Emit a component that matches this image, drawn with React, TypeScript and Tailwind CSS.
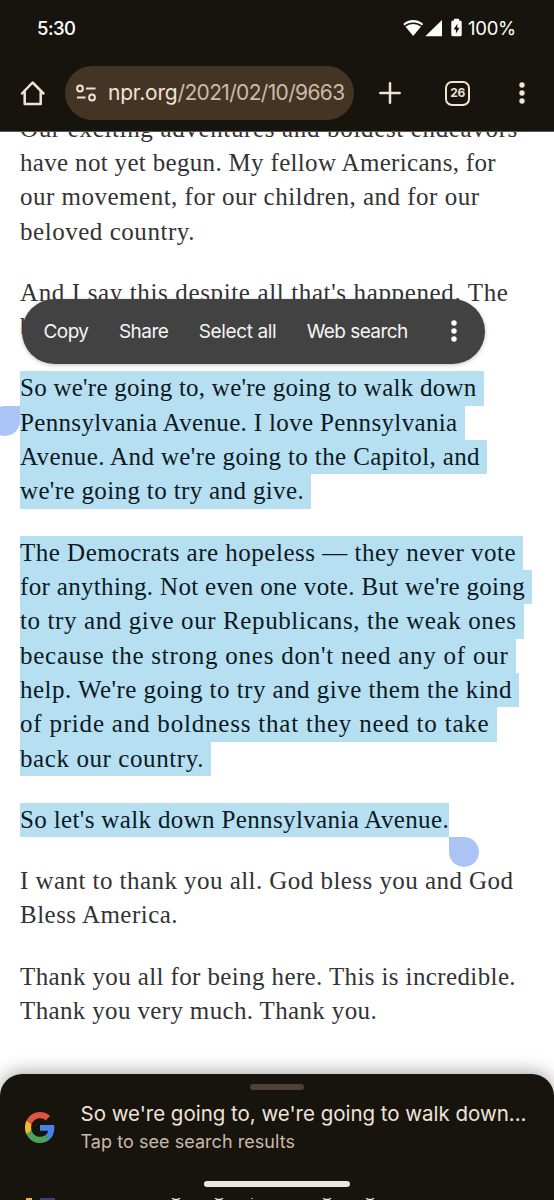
import { useLayoutEffect, useRef, useState } from "react";
import clsx from "clsx";

// Spreads letter spacing so that a run of text fills the given width
function FitText({ text, width, className }: { text: string; width: number; className?: string }) {
  const ref = useRef<HTMLSpanElement>(null);
  const [spacing, setSpacing] = useState(0);

  useLayoutEffect(() => {
    if (!ref.current) return;
    const natural = ref.current.getBoundingClientRect().width - spacing * text.length;
    setSpacing((width - natural) / text.length);
  }, [text, width]);

  return (
    <span ref={ref} className={clsx("inline-block whitespace-pre", className)} style={{ letterSpacing: `${spacing}px` }}>
      {text}
    </span>
  );
}

type TextLine = { text: string; width: number };
type Paragraph = { selected?: boolean; lines: TextLine[] };

const paragraphs: Paragraph[] = [
  {
    lines: [
      { text: "Our exciting adventures and boldest endeavors", width: 498 },
      { text: "have not yet begun. My fellow Americans, for", width: 476 },
      { text: "our movement, for our children, and for our", width: 459.5 },
      { text: "beloved country.", width: 175 },
    ],
  },
  {
    lines: [
      { text: "And I say this despite all that's happened. The", width: 488.5 },
      { text: "b", width: 12 },
    ],
  },
  {
    selected: true,
    lines: [
      { text: "So we're going to, we're going to walk down", width: 456.5 },
      { text: "Pennsylvania Avenue. I love Pennsylvania", width: 437.5 },
      { text: "Avenue. And we're going to the Capitol, and", width: 460 },
      { text: "we're going to try and give.", width: 284 },
    ],
  },
  {
    selected: true,
    lines: [
      { text: "The Democrats are hopeless — they never vote", width: 496 },
      { text: "for anything. Not even one vote. But we're going", width: 505 },
      { text: "to try and give our Republicans, the weak ones", width: 496.5 },
      { text: "because the strong ones don't need any of our", width: 488.5 },
      { text: "help. We're going to try and give them the kind", width: 492 },
      { text: "of pride and boldness that they need to take", width: 469.5 },
      { text: "back our country.", width: 184 },
    ],
  },
  {
    selected: true,
    lines: [{ text: "So let's walk down Pennsylvania Avenue.", width: 429 }],
  },
  {
    lines: [
      { text: "I want to thank you all. God bless you and God", width: 493.5 },
      { text: "Bless America.", width: 158 },
    ],
  },
  {
    lines: [
      { text: "Thank you all for being here. This is incredible.", width: 496 },
      { text: "Thank you very much. Thank you.", width: 357 },
    ],
  },
];

const actions = [
  { label: "Copy", width: 45 },
  { label: "Share", width: 49.5 },
  { label: "Select all", width: 77.5 },
  { label: "Web search", width: 101 },
];

function StatusBar() {
  return (
    <div className="flex h-[55px] items-center justify-between pl-[37px] pr-[38px] text-white">
      <FitText text="5:30" width={38.5} className="pt-[2px] text-[18.5px] font-medium" />
      <div className="flex items-center">
        <svg width="60" height="20" viewBox="0 0 60 20">
          <path d="M10.2 18 L0.3 5.9 C3 3.3 6.4 2 10.2 2 S17.4 3.3 20.1 5.9Z" fill="#fff" />
          <path d="M1.8 8.1 C4 6.3 6.8 5.2 10.2 5.2 S16.4 6.3 18.6 8.1" fill="none" stroke="#17130d" strokeWidth="1.5" />
          <path d="M39 2V18.3H22.3Z" fill="#fff" />
          <path d="M51 .8h5v1.8h1.2a1.5 1.5 0 0 1 1.5 1.5v12.7a1.5 1.5 0 0 1-1.5 1.5h-7.4a1.5 1.5 0 0 1-1.5-1.5V4.1a1.5 1.5 0 0 1 1.5-1.5h1.2z" fill="#fff" />
          <path d="M54.3 5.8 50.6 11.5h2.3v4L56.6 9.8h-2.3z" fill="#17130d" />
        </svg>
        <FitText text="100%" width={48} className="ml-[5px] pt-[2px] text-[18.5px]" />
      </div>
    </div>
  );
}

function AddressBar() {
  return (
    <div className="flex h-[76px] items-center">
      <svg className="ml-5" width="26" height="26" viewBox="0 0 26 26" fill="none" stroke="#f0e2d5" strokeWidth="2.5" strokeLinecap="round" strokeLinejoin="round">
        <path d="M2 13.5 12.6 2.5 23.5 13.5M4.7 11.5V24H20.7V11.5" />
      </svg>
      <div className="ml-[19px] flex h-[54px] w-[289px] items-center rounded-full bg-[#443424] pl-[11px]">
        <svg width="21" height="18" viewBox="0 0 21 18" fill="none" stroke="#f0e2d5" strokeWidth="2">
          <circle cx="4" cy="4.5" r="2.9" />
          <path d="M10 4.5H19.5M1 13.5H9.5" />
          <circle cx="16" cy="13.5" r="2.9" />
        </svg>
        <div className="ml-[11px] flex text-[21px] leading-[30px]">
          <FitText text="npr.org" width={69.5} className="text-[#f0e2d5]" />
          <FitText text="/2021/02/10/9663" width={167} className="text-[#cdbba8]" />
        </div>
      </div>
      <svg className="ml-[25px]" width="22" height="22" viewBox="0 0 22 22" stroke="#f0e2d5" strokeWidth="2.5" strokeLinecap="round">
        <path d="M11 1.3V20.7M1.3 11H20.7" />
      </svg>
      <div className="ml-11 flex size-[25px] items-center justify-center rounded-[7px] border-[2.5px] border-[#f0e2d5] text-[12px] font-bold tracking-[-0.4px] text-[#f0e2d5]">
        26
      </div>
      <svg className="ml-[49px]" width="6" height="24" viewBox="0 0 6 24" fill="#f0e2d5">
        <circle cx="3" cy="4" r="2.7" />
        <circle cx="3" cy="12" r="2.7" />
        <circle cx="3" cy="20" r="2.7" />
      </svg>
    </div>
  );
}

function SelectionMenu() {
  return (
    <div className="absolute left-[21.5px] top-[299px] flex h-[64.5px] w-[463.5px] items-center gap-[30.4px] rounded-full bg-[#424242] pl-[22px] text-[19px] text-[#f5f5f5] shadow-[0_1px_4px_rgba(0,0,0,0.25)]">
      {actions.map((action) => (
        <FitText key={action.label} text={action.label} width={action.width} className="pt-px" />
      ))}
      <svg className="ml-[13px]" width="6" height="24" viewBox="0 0 6 24" fill="#fff">
        <circle cx="3" cy="4" r="2.7" />
        <circle cx="3" cy="12" r="2.7" />
        <circle cx="3" cy="20" r="2.7" />
      </svg>
    </div>
  );
}

function Article() {
  return (
    <article className="-mt-[20.5px] flex flex-col gap-[26.9px] pl-5 font-['Liberation_Serif',serif] text-[25px] leading-[33.6px] text-[#333]">
      {paragraphs.map((paragraph, i) => (
        <div key={i}>
          {paragraph.lines.map((line) => (
            <div key={line.text} className="flex h-[34.35px]">
              <div
                className={clsx(
                  "h-full",
                  paragraph.selected && "bg-[#b7dff2] text-[#0b1a22]",
                  paragraph.selected && paragraph.lines.length > 1 && "pr-[7px]"
                )}
              >
                <FitText text={line.text} width={line.width} />
              </div>
            </div>
          ))}
        </div>
      ))}
    </article>
  );
}

function GoogleLogo() {
  return (
    <svg width="30" height="31" viewBox="0 0 48 48" preserveAspectRatio="none">
      <path fill="#e05243" d="M24 9.5c3.54 0 6.71 1.22 9.21 3.6l6.85-6.85C35.9 2.38 30.47 0 24 0 14.62 0 6.51 5.38 2.56 13.22l7.98 6.19C12.43 13.72 17.74 9.5 24 9.5z" />
      <path fill="#4a80ec" d="M46.98 24.55c0-1.57-.15-3.09-.38-4.55H24v9.02h12.94c-.58 2.96-2.26 5.48-4.78 7.18l7.73 6c4.51-4.18 7.09-10.36 7.09-17.65z" />
      <path fill="#f2b92e" d="M10.53 28.59c-.48-1.45-.76-2.99-.76-4.59s.27-3.14.76-4.59l-7.98-6.19C.92 16.46 0 20.12 0 24c0 3.88.92 7.54 2.56 10.78l7.97-6.19z" />
      <path fill="#4aa35a" d="M24 48c6.48 0 11.93-2.13 15.89-5.81l-7.73-6c-2.15 1.45-4.92 2.3-8.16 2.3-6.26 0-11.57-4.22-13.47-9.91l-7.98 6.19C6.51 42.62 14.62 48 24 48z" />
    </svg>
  );
}

function SearchSheet() {
  return (
    <div className="absolute inset-x-0 bottom-0 flex h-[126px] flex-col overflow-clip rounded-t-[22px] bg-[#17130d]">
      <div className="mt-[10px] h-[6px] w-[54px] self-center rounded-full bg-[#4d413a]" />
      <div className="flex h-[68px] pl-[25px]">
        <div className="mt-[22px]">
          <GoogleLogo />
        </div>
        <div className="ml-[25.5px] mt-[10px] flex flex-col">
          <FitText text="So we're going to, we're going to walk down..." width={446} className="h-[28px] text-[20.5px] leading-[28px] text-[#efe3d8]" />
          <FitText text="Tap to see search results" width={214.5} className="h-[26px] self-start text-[18px] leading-[27px] text-[#c9b9ab]" />
        </div>
      </div>
      <div className="mt-[23px] h-[5.5px] w-[146px] self-center rounded-full bg-[#ece7e6]" />
      {/* top edge of the next row */}
      <svg className="mt-auto shrink-0" width="554" height="2" viewBox="0 0 554 2">
        <path d="M26 0h6v2h-6z" fill="#f2b92e" />
        <path d="M40 0h15v2H40z" fill="#33477c" />
        <path d="M172 0l2 1.5h4l2-1.5M215 0l2 1.5h4l2-1.5M323 0l2 1.5h4l2-1.5M366 0l2 1.5h4l2-1.5M252 0v1" fill="none" stroke="#efe3d8" strokeWidth="1.3" />
      </svg>
    </div>
  );
}

export default function App() {
  return (
    <div className="relative flex h-[1200px] w-[554px] flex-col overflow-hidden bg-white font-['Inter',sans-serif]">
      <header className="relative z-10 h-[132px] shrink-0 border-b border-[#5c5650] bg-[#17130d]">
        <StatusBar />
        <AddressBar />
      </header>
      <main className="grow">
        <Article />
      </main>

      {/* selection handles */}
      <div className="absolute -left-[10px] top-[405.5px] size-[30px] rounded-full rounded-tr-none bg-[#abc4f5]" />
      <div className="absolute left-[449px] top-[837px] size-[30px] rounded-full rounded-tl-none bg-[#abc4f5]" />

      <SelectionMenu />
      <div className="absolute inset-x-0 bottom-0 h-[126px] rounded-t-[22px] shadow-[0_-2px_18px_rgba(0,0,0,0.35)]" />
      <SearchSheet />
    </div>
  );
}
